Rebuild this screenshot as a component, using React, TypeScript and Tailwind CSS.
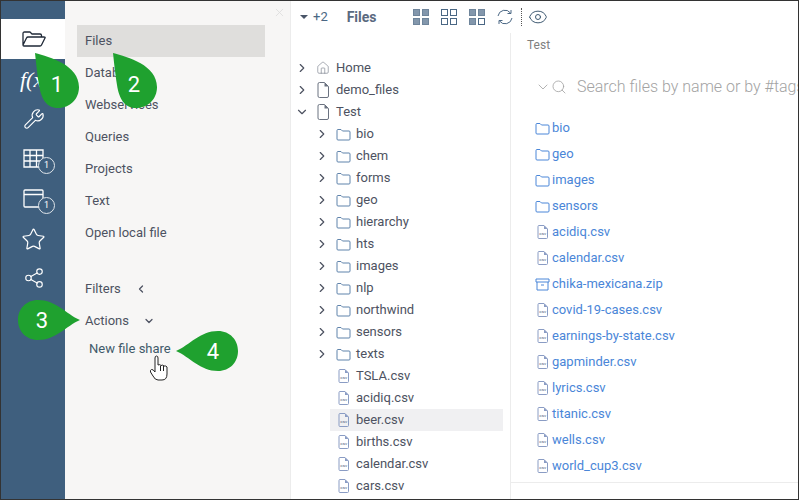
import React from "react";
import { Wrench, Star, Share2, ChevronRight, ChevronDown, ChevronLeft, House, Search, Eye, X } from "lucide-react";

const panelItems = ["Files", "Databases", "Webservices", "Queries", "Projects", "Text", "Open local file"];
const treeFolders = ["bio", "chem", "forms", "geo", "hierarchy", "hts", "images", "nlp", "northwind", "sensors", "texts"];
const treeFiles = ["TSLA.csv", "acidiq.csv", "beer.csv", "births.csv", "calendar.csv", "cars.csv"];
const listFolders = ["bio", "geo", "images", "sensors"];
const listFiles = ["acidiq.csv", "calendar.csv", "chika-mexicana.zip", "covid-19-cases.csv", "earnings-by-state.csv", "gapminder.csv", "lyrics.csv", "titanic.csv", "wells.csv", "world_cup3.csv"];

function FolderIcon({ className }: { className: string }) {
  return (
    <svg viewBox="0 0 15 13" className={className} fill="none" stroke="currentColor" strokeWidth="1">
      <path d="M1 2.5 Q1 1.5 2 1.5 H5 L6.5 3 H13 Q14 3 14 4 V11 Q14 12 13 12 H2 Q1 12 1 11 Z" />
    </svg>
  );
}

function CsvIcon({ className }: { className: string }) {
  return (
    <svg viewBox="0 0 11 14" className={className} fill="none">
      <path d="M1 1.5 Q1 .5 2 .5 H7 L10.5 4 V12.5 Q10.5 13.5 9.5 13.5 H2 Q1 13.5 1 12.5 Z" stroke="#8a9cc4" strokeWidth="1" />
      <path d="M7 .5 V4 H10.5 Z" fill="#8a9cc4" />
      <text x="5.7" y="9.8" textAnchor="middle" fontSize="4.4" fill="#4a5a78" fontFamily="Roboto, sans-serif">csv</text>
    </svg>
  );
}

function PageIcon() {
  return (
    <svg viewBox="0 0 12 16" className="h-[16px] w-[12px]" fill="none">
      <path d="M1 2 Q1 .5 2.5 .5 H7.5 L11.5 4.5 V14 Q11.5 15.5 10 15.5 H2.5 Q1 15.5 1 14 Z" stroke="#6b7280" strokeWidth="1" />
      <path d="M7.5 .5 V4.5 H11.5 Z" fill="#6b7280" />
    </svg>
  );
}

function GridIcon({ filled }: { filled: number[] }) {
  return (
    <svg viewBox="0 0 16 16" className="h-[16px] w-[16px]">
      {[[0, 0], [9, 0], [0, 9], [9, 9]].map(([x, y], i) => (
        <rect
          key={i}
          x={x + 0.5}
          y={y + 0.5}
          width="6"
          height="6"
          fill={filled.includes(i) ? "#8397ac" : "none"}
          stroke={filled.includes(i) ? "#6f859b" : "#4a6784"}
        />
      ))}
    </svg>
  );
}

function Badge() {
  return (
    <span className="absolute left-[37px] top-[18px] flex h-[17px] w-[17px] items-center justify-center rounded-full border border-[#dfe5ea] bg-[#3f5f7e] text-[9px] text-white">
      1
    </span>
  );
}

function SideIcon({ children, badge }: { children: React.ReactNode; badge?: boolean }) {
  return (
    <div className="relative flex h-10 items-center pl-[22px] text-white">
      {children}
      {badge && <Badge />}
    </div>
  );
}

export default function App() {
  return (
    <div className="relative flex h-[500px] w-[799px] overflow-hidden border border-[#333333] bg-white text-[13px] font-['Roboto',sans-serif] text-[#4d5261]">
      {/* Sidebar */}
      <div className="flex w-[64px] shrink-0 flex-col bg-[#3f5f7e] pt-[18px]">
        <div className="flex h-10 items-center bg-white pl-[21px] text-[#1f2937]">
          <svg viewBox="0 0 24 16" className="h-[16px] w-[24px]" fill="none" stroke="currentColor" strokeWidth="1.3" strokeLinejoin="round">
            <path d="M1 14 V2.5 Q1 1 2.5 1 H8 L10 3 H18 Q19.5 3 19.5 4.5 V6 M1 14 L4.5 7 Q5 6 6 6 H22 Q23.5 6 23 7 L19.5 14 Q19 15 18 15 H2 Q1 15 1 14 Z" />
          </svg>
        </div>
        <SideIcon>
          <span className="-ml-[3px] font-['Liberation_Serif',serif] text-[22px] italic whitespace-nowrap">f(x)</span>
        </SideIcon>
        <SideIcon><Wrench size={22} strokeWidth={1.25} /></SideIcon>
        <SideIcon badge>
          <svg viewBox="0 0 21 19" className="mb-[2px] h-[19px] w-[21px]" fill="none" stroke="currentColor" strokeWidth="1.3">
            <path d="M1 1 H20 V18 H1 Z M1 6.5 H20 M1 12 H20 M7 1 V18 M13.5 1 V18" />
          </svg>
        </SideIcon>
        <SideIcon badge>
          <svg viewBox="0 0 21 19" className="mb-[2px] h-[19px] w-[21px]" fill="none" stroke="currentColor" strokeWidth="1.3">
            <path d="M1 2 Q1 1 2 1 H19 Q20 1 20 2 V17 Q20 18 19 18 H2 Q1 18 1 17 Z M1 5.5 H20" />
          </svg>
        </SideIcon>
        <SideIcon><Star size={25} strokeWidth={1.15} className="-ml-[2px]" /></SideIcon>
        <SideIcon><Share2 size={22} strokeWidth={1.25} className="mb-[2px]" /></SideIcon>
      </div>

      {/* Browse panel */}
      <div className="relative flex w-[225px] shrink-0 flex-col bg-[#f7f6f5] pt-[24px]">
        <X size={13} strokeWidth={1.5} className="absolute left-[208px] top-[5px] text-[#dcdcdc]" />
        {panelItems.map((item, i) => (
          <div key={item} className={`ml-[12px] flex h-8 w-[188px] items-center pl-[8px] ${i === 0 ? "bg-[#dfdedc]" : ""}`}>
            {item}
          </div>
        ))}
        <div className="ml-[20px] mt-[24px] flex h-8 items-center">
          Filters
          <ChevronLeft size={12} strokeWidth={2.5} className="ml-[14px]" />
        </div>
        <div className="ml-[20px] flex h-8 items-center">
          Actions
          <ChevronDown size={12} strokeWidth={2.5} className="ml-[14px]" />
        </div>
        <div className="ml-[24px] flex h-6 items-center text-[#3f5a6a]">New file share</div>
      </div>

      {/* Main area */}
      <div className="flex min-w-0 flex-1 flex-col border-l border-[#ececec]">
        <div className="flex h-[32px] shrink-0 items-center text-[#4a6784]">
          <span className="ml-[9px] h-0 w-0 border-x-[4px] border-t-[4px] border-x-transparent border-t-[#4a5568]" />
          <span className="ml-[5px] text-[13px]">+2</span>
          <span className="ml-[19px] text-[14px] font-bold text-[#5a6a80]">Files</span>
          <div className="ml-[36px] flex items-center gap-[12px]">
            <GridIcon filled={[0, 1, 2, 3]} />
            <GridIcon filled={[]} />
            <GridIcon filled={[0, 1, 2]} />
          </div>
          <svg viewBox="0 0 16 16" className="ml-[12px] h-[16px] w-[16px]" fill="none" stroke="currentColor" strokeWidth="1">
            <path d="M1 7 A7 7 0 0 1 13.5 4 M15 9 A7 7 0 0 1 2.5 12 M14 1 V4.5 H10.5 M2 15 V11.5 H5.5" />
          </svg>
          <div className="ml-[8px] h-[18px] border-l border-dotted border-[#555555]" />
          <Eye size={20} strokeWidth={1.2} className="ml-[6px] text-[#3f5a72]" />
        </div>

        <div className="flex min-h-0 flex-1">
          {/* Tree */}
          <div className="w-[219px] shrink-0 overflow-hidden pt-[24px]">
            <div className="flex h-[22px] items-center">
              <ChevronRight size={14} strokeWidth={2} className="ml-[4px] mr-[4px]" />
              <span className="flex w-[20px] justify-center text-[#6b7280]"><House size={14} strokeWidth={1} /></span>
              <span className="ml-[3px]">Home</span>
            </div>
            <div className="flex h-[22px] items-center">
              <ChevronRight size={14} strokeWidth={2} className="ml-[4px] mr-[4px]" />
              <span className="flex w-[20px] justify-center"><PageIcon /></span>
              <span className="ml-[3px]">demo_files</span>
            </div>
            <div className="flex h-[22px] items-center">
              <ChevronDown size={14} strokeWidth={2} className="ml-[4px] mr-[4px]" />
              <span className="flex w-[20px] justify-center"><PageIcon /></span>
              <span className="ml-[3px]">Test</span>
            </div>
            {treeFolders.map((name) => (
              <div key={name} className="flex h-[22px] items-center">
                <ChevronRight size={14} strokeWidth={2} className="ml-[24px] mr-[4px]" />
                <span className="flex w-[20px] justify-center text-[#5f83ab]"><FolderIcon className="h-[13px] w-[15px]" /></span>
                <span className="ml-[3px]">{name}</span>
              </div>
            ))}
            {treeFiles.map((name) => (
              <div key={name} className={`ml-[39px] mr-[7px] flex h-[22px] items-center ${name === "beer.csv" ? "bg-[#f0f0f2]" : ""}`}>
                <span className="ml-[6px] flex w-[14px] justify-center"><CsvIcon className="h-[14px] w-[11px]" /></span>
                <span className="ml-[6px]">{name}</span>
              </div>
            ))}
          </div>

          {/* File list */}
          <div className="flex min-w-0 flex-1 flex-col overflow-hidden border-l border-[#ececec]">
            <div className="ml-[16px] mt-[4px] text-[12px] leading-[16px] text-[#7f7f7f]">Test</div>
            <div className="ml-[24px] mt-[22px] flex h-[24px] items-center whitespace-nowrap text-[#a3a3a3]">
              <ChevronDown size={16} strokeWidth={1.25} className="shrink-0" />
              <Search size={16} strokeWidth={1.25} className="shrink-0" />
              <span className="ml-[10px] text-[16px] font-light">Search files by name or by #tags</span>
            </div>
            <div className="mt-[16px] flex flex-1 flex-col pl-[24px] text-[#4a86d8]">
              {listFolders.map((name) => (
                <div key={name} className="flex h-[26px] shrink-0 items-center">
                  <FolderIcon className="h-[13px] w-[15px]" />
                  <span className="ml-[2px]">{name}</span>
                </div>
              ))}
              {listFiles.map((name) => (
                <div key={name} className="flex h-[26px] shrink-0 items-center">
                  {name.endsWith(".zip") ? (
                    <svg viewBox="0 0 15 13" className="h-[13px] w-[15px]" fill="none" stroke="currentColor" strokeWidth="1">
                      <path d="M1 1 H14 V4 H1 Z M2 4 V12 H13 V4 M6 7 H9" />
                    </svg>
                  ) : (
                    <span className="flex w-[15px] justify-center"><CsvIcon className="h-[14px] w-[11px]" /></span>
                  )}
                  <span className="ml-[2px]">{name}</span>
                </div>
              ))}
            </div>
            <div className="h-[17px] shrink-0 border-t border-[#ececec]" />
          </div>
        </div>
      </div>

      {/* Numbered callouts */}
      <svg viewBox="0 0 799 500" className="pointer-events-none absolute -left-px -top-px h-[500px] w-[799px]">
        <g fill="#1fa12f">
          <path d="M35 53 C50 57 79 65 79 87 C79 99 70 108 58 108 C46 108 41 98 39 85 C37 72 36 62 35 53 Z" />
          <path d="M113 53 C128 57 157 65 157 87 C157 99 148 108 136 108 C124 108 119 98 117 85 C115 72 114 62 113 53 Z" />
          <path d="M80 320 C66 326 56 340 38 340 C26 340 18 331 18 320 C18 309 26 300 38 300 C56 300 66 314 80 320 Z" />
          <path d="M176 351 C190 345 200 331 218 331 C230 331 238 340 238 351 C238 362 230 371 218 371 C200 371 190 357 176 351 Z" />
        </g>
        <g fill="#ffffff" fontSize="22" textAnchor="middle" fontFamily="Roboto, sans-serif">
          <text x="57" y="92">1</text>
          <text x="134" y="92">2</text>
          <text x="42" y="328">3</text>
          <text x="213" y="359">4</text>
        </g>
        {/* Hand cursor */}
        <path
          d="M155 371 V358 Q155 356 156.5 356 Q158 356 158 358 V365 Q160 364 161 365.5 Q163 364.5 164 366 Q166 365.5 167 367 V374 Q167 380 162 380 H158 Q155 380 153 376 L150.5 372 Q150 370 151.5 369.5 Q153 369 155 372 Z M160.5 366 V371 M163.5 366 V371"
          fill="#ffffff"
          stroke="#222222"
          strokeWidth="1"
        />
      </svg>
    </div>
  );
}
